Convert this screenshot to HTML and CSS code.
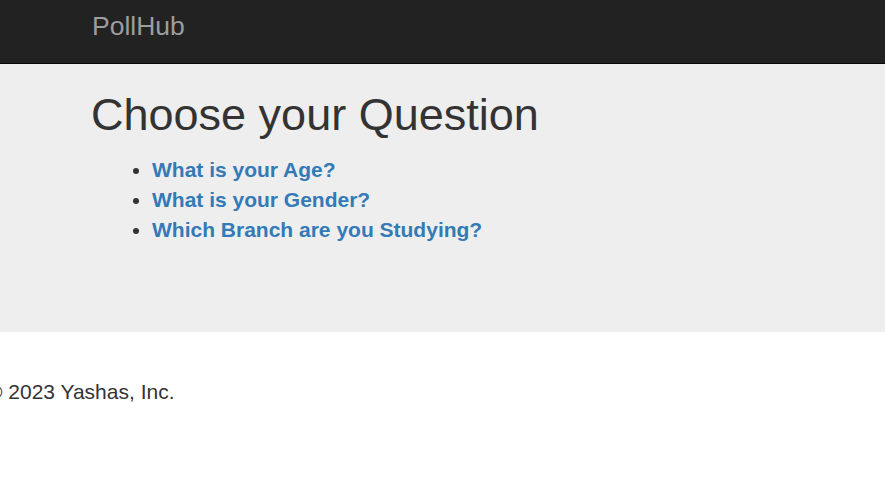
FILE: index.html
```html
<!DOCTYPE html>
<html>
<head>
<meta charset="utf-8">
<title>PollHub</title>
<link rel="stylesheet" href="styles.css">
</head>
<body>
<nav class="navbar">
  <div class="container">
    <a class="brand" href="#">PollHub</a>
  </div>
</nav>
<div class="jumbotron">
  <div class="container">
    <h1 class="title">Choose your Question</h1>
    <ul class="questions">
      <li><a href="#">What is your Age?</a></li>
      <li><a href="#">What is your Gender?</a></li>
      <li><a href="#">Which Branch are you Studying?</a></li>
    </ul>
  </div>
</div>
<footer class="footer">
  <p class="copy">© 2023 Yashas, Inc.</p>
</footer>
</body>
</html>
```

FILE: styles.css
```css
html, body {
  margin: 0;
  padding: 0;
}
body {
  font-family: "Liberation Sans", Arial, sans-serif;
  color: #333;
  background: #fff;
  font-size: 14px;
  line-height: 1.42857;
}
.navbar {
  background: #222;
  border-bottom: 1px solid #080808;
  height: 63px;
  box-sizing: content-box;
}
.container {
  padding-left: 92px;
  padding-right: 15px;
}
.navbar .container {
  padding-top: 11px;
}
.brand {
  display: inline-block;
  font-size: 26.5px;
  line-height: 30px;
  color: #9d9d9d;
  text-decoration: none;
}
.jumbotron {
  background: #eee;
  padding: 26px 0 0;
  height: 242px;
  box-sizing: content-box;
}
.title {
  margin: 0 0 0 -1px;
  font-size: 45px;
  font-weight: 500;
  line-height: 49.5px;
}
.questions {
  margin: 15px 0 0;
  padding-left: 60px;
  font-size: 21px;
  line-height: 30px;
}
.questions a {
  color: #337ab7;
  font-weight: bold;
  text-decoration: none;
}
.footer {
  padding-top: 45px;
}
.copy {
  margin: 0 0 0 -13px;
  font-size: 21px;
  line-height: 30px;
}
```
